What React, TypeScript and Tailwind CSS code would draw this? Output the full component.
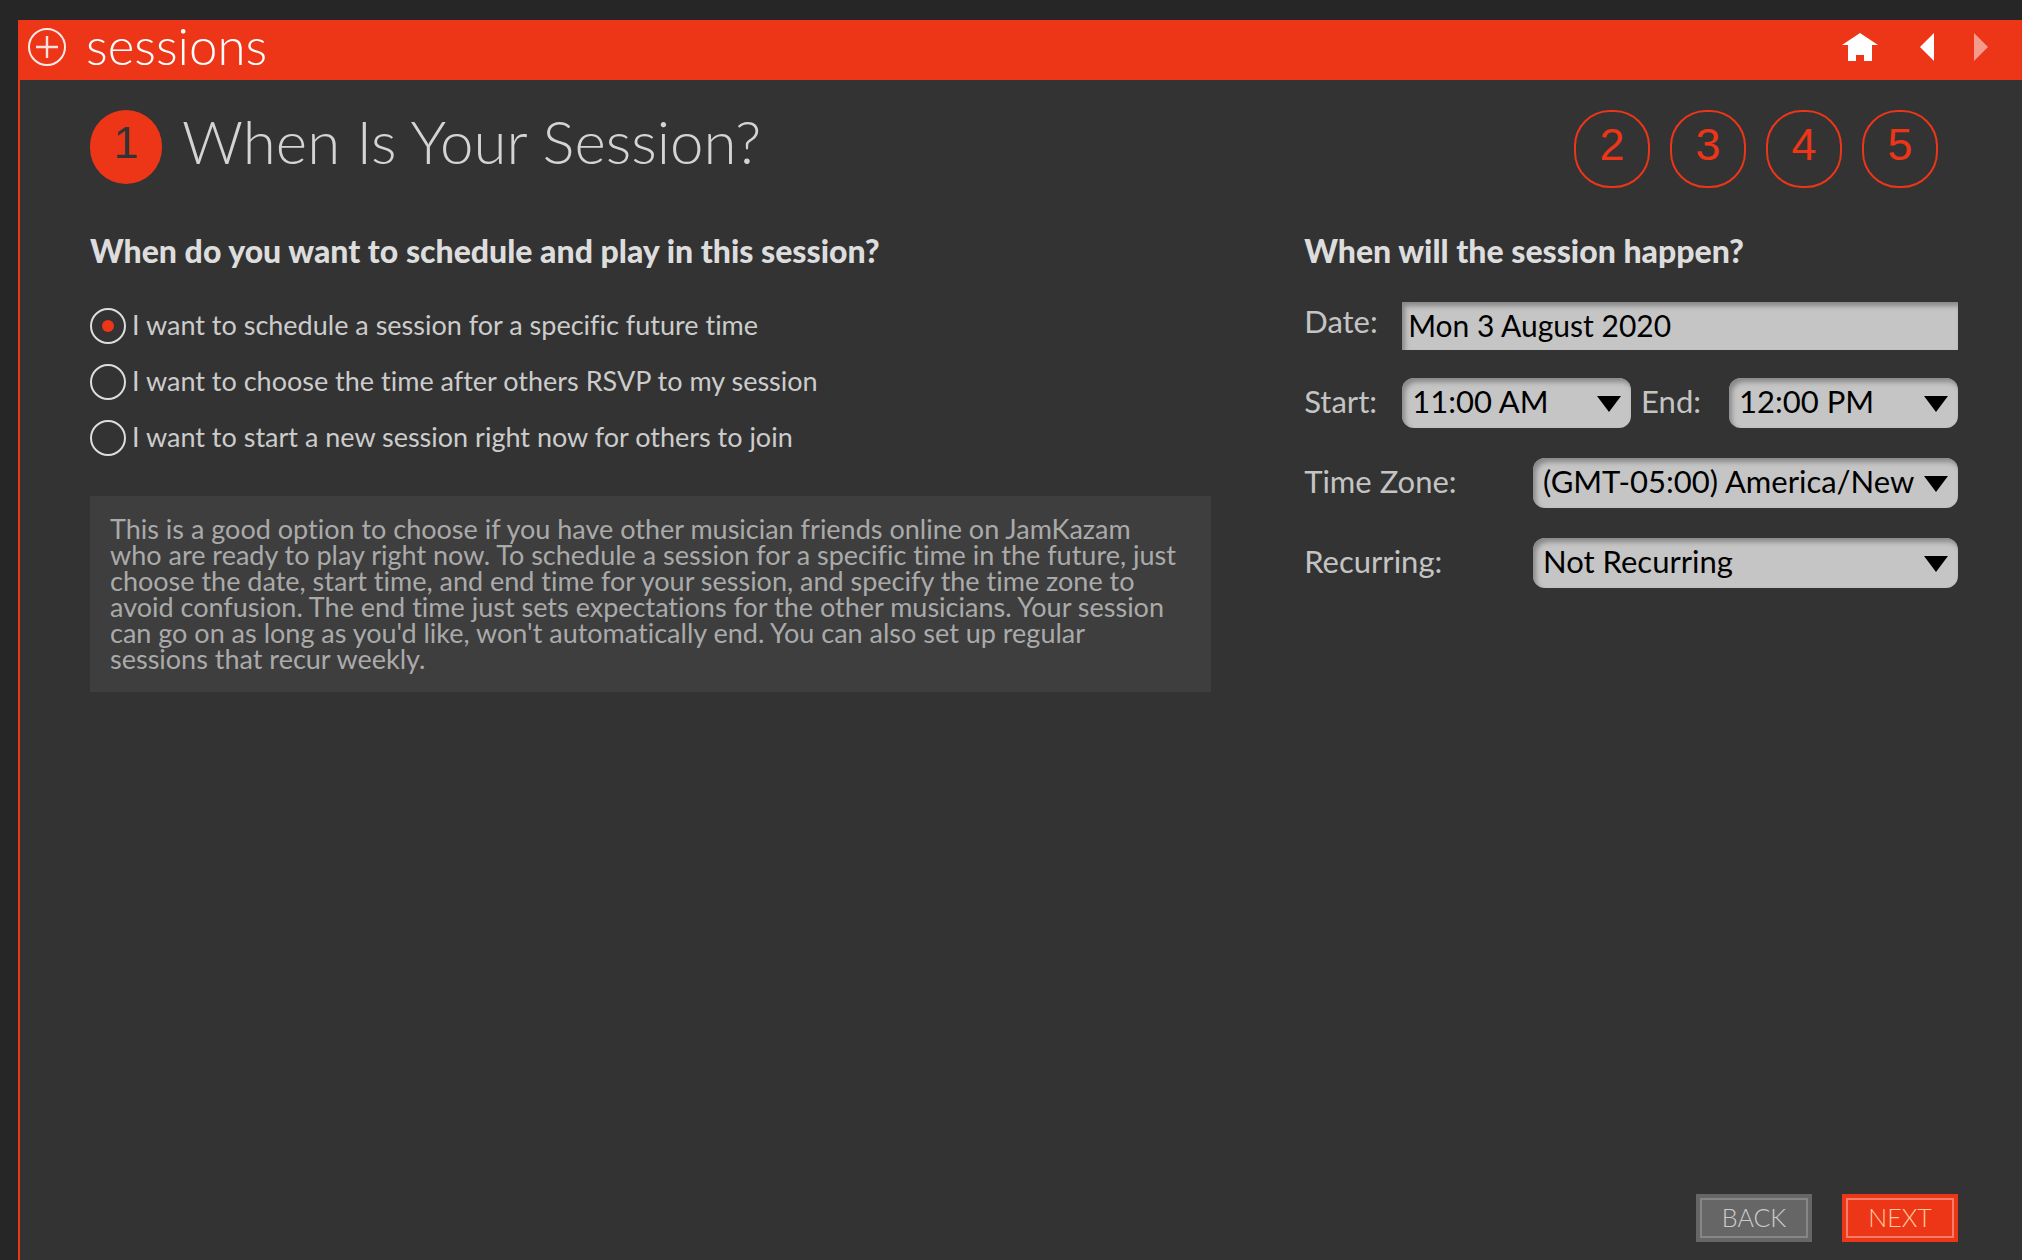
import { useState } from 'react';
import type { ReactNode } from 'react';

const choices = [
  'I want to schedule a session for a specific future time',
  'I want to choose the time after others RSVP to my session',
  'I want to start a new session right now for others to join',
];

function Select({ id, options, className }: { id: string; options: string[]; className: string }) {
  return (
    <div className={`relative h-[50px] ${className}`}>
      <select
        id={id}
        className="h-full w-full appearance-none overflow-hidden rounded-xl bg-[#c5c5c5] pb-1 pl-2.5 pr-10 text-[31px] leading-[46px] text-black shadow-[inset_3px_4px_5px_#888]"
      >
        {options.map((option) => (
          <option key={option}>{option}</option>
        ))}
      </select>
      <svg className="pointer-events-none absolute right-2.5 top-[18px] h-4 w-6" viewBox="0 0 24 16" aria-hidden="true">
        <path d="M0 0h24L12 16z" fill="#000" />
      </svg>
    </div>
  );
}

function Label({ htmlFor, className, children }: { htmlFor: string; className?: string; children: ReactNode }) {
  return (
    <label htmlFor={htmlFor} className={`shrink-0 text-[31px] text-[#c4c4c4] ${className ?? ''}`}>
      {children}
    </label>
  );
}

function Header() {
  return (
    <header className="flex h-15 items-center bg-[#ed3618] pb-1.5 pl-2 pr-[34px] text-white">
      <svg className="h-[38px] w-[38px]" viewBox="0 0 38 38" fill="none" stroke="currentColor" strokeWidth="2" aria-hidden="true">
        <circle cx="19" cy="19" r="18" strokeOpacity=".9" />
        <path d="M19 8v22M8 19h22" strokeWidth="2.4" strokeOpacity=".85" />
      </svg>
      <h1 className="ml-5 pb-0.5 text-[51px] leading-[54px] font-light">sessions</h1>
      <nav className="ml-auto flex items-center">
        <a href="#home" aria-label="Home">
          <svg className="h-7 w-9" viewBox="0 0 36 28" fill="currentColor" aria-hidden="true">
            <path d="M18 0 36 12H30V28H22V22H14V28H6V12H0z" />
          </svg>
        </a>
        <button type="button" aria-label="Previous" className="ml-[42px]">
          <svg className="h-7 w-3.5" viewBox="0 0 14 28" fill="currentColor" aria-hidden="true">
            <path d="M14 0v28L0 14z" />
          </svg>
        </button>
        <button type="button" aria-label="Following" className="ml-10 opacity-50" disabled>
          <svg className="h-7 w-3.5" viewBox="0 0 14 28" fill="currentColor" aria-hidden="true">
            <path d="M0 0v28l14-14z" />
          </svg>
        </button>
      </nav>
    </header>
  );
}

function Steps() {
  return (
    <div className="flex h-[78px] items-start">
      <span className="h-[74px] w-[72px] rounded-[36px] bg-[#ed3618] text-center font-['Liberation_Sans'] text-[45px] leading-[66px] text-[#333]">
        1
      </span>
      <h2 className="ml-5 text-[60px] leading-[62px] font-light text-[#d4d4d4]">When Is Your Session?</h2>
      <div className="ml-auto mr-5 flex gap-5 font-['Liberation_Sans'] text-[45px] leading-[66px]">
        {[2, 3, 4, 5].map((step) => (
          <button key={step} type="button" className="flex h-[78px] w-[76px] justify-center rounded-[36px] border-2 border-[#ed3618] text-[#ed3618]">
            {step}
          </button>
        ))}
      </div>
    </div>
  );
}

export default function App() {
  const [choice, setChoice] = useState(0);
  return (
    <div className="flex min-h-screen flex-col bg-[#262626] pl-[18px] pt-5 font-['Lato',sans-serif] [font-variant-ligatures:none]">
      <div className="flex grow flex-col border-l-2 border-[#ed3618] bg-[#333]">
        <Header />
        <main className="flex grow flex-col pb-[18px] pl-[70px] pr-16 pt-[30px]">
          <Steps />
          <div className="mt-11 flex justify-between">
            <section className="w-[60%]">
              <h3 id="when" className="text-[32px] leading-[38px] font-black text-[#ddd]">
                When do you want to schedule and play in this session?
              </h3>
              <div role="radiogroup" aria-labelledby="when" className="mt-[38px] flex flex-col gap-5">
                {choices.map((text, i) => (
                  <label key={text} className="flex h-9 items-center text-[27px] leading-8 text-[#ccc]">
                    <input
                      type="radio"
                      name="choice"
                      checked={choice === i}
                      onChange={() => setChoice(i)}
                      className="mr-1.5 grid h-9 w-9 shrink-0 appearance-none place-items-center rounded-full border-2 border-[#ddd] before:h-3 before:w-3 before:rounded-full checked:before:bg-[#ed3618]"
                    />
                    <span className="pb-0.5">{text}</span>
                  </label>
                ))}
              </div>
              <p className="mt-10 bg-[#3e3e3e] py-5 pl-5 pr-7 text-[27px] leading-[26px] text-[#aaa]">
                This is a good option to choose if you have other musician friends online on JamKazam who are ready to play
                right now. To schedule a session for a specific time in the future, just choose the date, start time, and end
                time for your session, and specify the time zone to avoid confusion. The end time just sets expectations for
                the other musicians. Your session can go on as long as you'd like, won't automatically end. You can also set
                up regular sessions that recur weekly.
              </p>
            </section>
            <section className="w-[35%]">
              <h3 className="text-[32px] leading-[38px] font-black text-[#ddd]">When will the session happen?</h3>
              <div className="mt-8 flex h-12 items-start">
                <Label htmlFor="date" className="w-[98px] leading-[38px]">Date:</Label>
                <input
                  id="date"
                  type="text"
                  defaultValue="Mon 3 August 2020"
                  className="h-12 min-w-0 grow bg-[#c5c5c5] px-1.5 pb-0.5 text-[30px] text-black shadow-[inset_3px_4px_5px_#888]"
                />
              </div>
              <div className="mt-7 flex">
                <Label htmlFor="start" className="w-[98px] leading-[46px]">Start:</Label>
                <Select id="start" className="grow basis-0" options={['11:00 AM', '12:00 PM']} />
                <Label htmlFor="end" className="ml-2.5 w-[88px] leading-[46px]">End:</Label>
                <Select id="end" className="grow basis-0" options={['12:00 PM', '1:00 PM']} />
              </div>
              <div className="mt-[30px] flex justify-between">
                <Label htmlFor="zone" className="leading-[46px]">Time Zone:</Label>
                <Select id="zone" className="w-[65%]" options={['(GMT-05:00) America/New']} />
              </div>
              <div className="mt-[30px] flex justify-between">
                <Label htmlFor="recurring" className="leading-[46px]">Recurring:</Label>
                <Select id="recurring" className="w-[65%]" options={['Not Recurring', 'Weekly']} />
              </div>
            </section>
          </div>
          <div className="mt-auto flex justify-end gap-[30px] text-[25px] leading-8 font-light">
            <button type="button" className="h-12 w-[116px] bg-[#666] p-1 text-[#ccc]">
              <span className="flex h-full items-center justify-center border-2 border-[#868686] pb-0.5">BACK</span>
            </button>
            <button type="button" className="h-12 w-[116px] bg-[#ed3618] p-1 text-[#fc9]">
              <span className="flex h-full items-center justify-center border-2 border-[#f47d68] pb-0.5">NEXT</span>
            </button>
          </div>
        </main>
      </div>
    </div>
  );
}
